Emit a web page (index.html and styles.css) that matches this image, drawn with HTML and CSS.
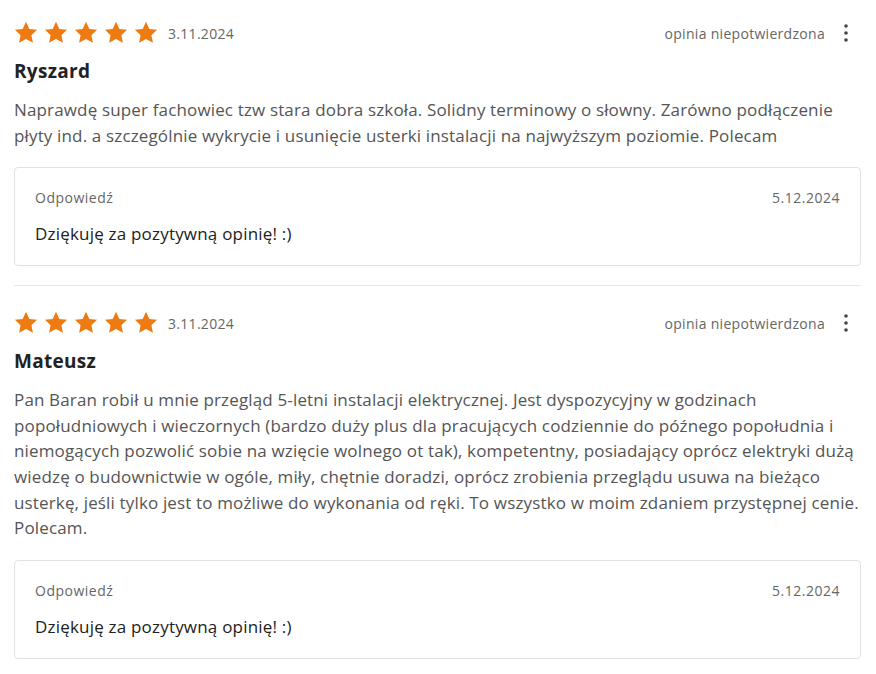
FILE: index.html
```html
<!DOCTYPE html>
<html lang="pl">
<head>
<meta charset="utf-8">
<link rel="stylesheet" href="styles.css">
</head>
<body>
<div class="reviews">
  <div class="review">
    <div class="head">
      <div class="stars">
        <svg viewBox="0 0 24 24" class="star"><path d="M12 1.6l3.1 6.6 7.1.9-5.2 4.9 1.4 7.1L12 17.6l-6.4 3.5 1.4-7.1-5.2-4.9 7.1-.9z"/></svg>
        <svg viewBox="0 0 24 24" class="star"><path d="M12 1.6l3.1 6.6 7.1.9-5.2 4.9 1.4 7.1L12 17.6l-6.4 3.5 1.4-7.1-5.2-4.9 7.1-.9z"/></svg>
        <svg viewBox="0 0 24 24" class="star"><path d="M12 1.6l3.1 6.6 7.1.9-5.2 4.9 1.4 7.1L12 17.6l-6.4 3.5 1.4-7.1-5.2-4.9 7.1-.9z"/></svg>
        <svg viewBox="0 0 24 24" class="star"><path d="M12 1.6l3.1 6.6 7.1.9-5.2 4.9 1.4 7.1L12 17.6l-6.4 3.5 1.4-7.1-5.2-4.9 7.1-.9z"/></svg>
        <svg viewBox="0 0 24 24" class="star"><path d="M12 1.6l3.1 6.6 7.1.9-5.2 4.9 1.4 7.1L12 17.6l-6.4 3.5 1.4-7.1-5.2-4.9 7.1-.9z"/></svg>
        <span class="date">3.11.2024</span>
      </div>
      <div class="status">
        <span>opinia niepotwierdzona</span>
        <svg class="kebab" viewBox="0 0 6 20"><circle cx="3" cy="3" r="1.8"/><circle cx="3" cy="10" r="1.8"/><circle cx="3" cy="17" r="1.8"/></svg>
      </div>
    </div>
    <div class="name">Ryszard</div>
    <p class="text">Naprawdę super fachowiec tzw stara dobra szkoła. Solidny terminowy o słowny. Zarówno podłączenie płyty ind. a szczególnie wykrycie i usunięcie usterki instalacji na najwyższym poziomie. Polecam</p>
    <div class="answer">
      <div class="answer-head"><span>Odpowiedź</span><span>5.12.2024</span></div>
      <div class="answer-text">Dziękuję za pozytywną opinię! :)</div>
    </div>
  </div>
  <div class="review">
    <div class="head">
      <div class="stars">
        <svg viewBox="0 0 24 24" class="star"><path d="M12 1.6l3.1 6.6 7.1.9-5.2 4.9 1.4 7.1L12 17.6l-6.4 3.5 1.4-7.1-5.2-4.9 7.1-.9z"/></svg>
        <svg viewBox="0 0 24 24" class="star"><path d="M12 1.6l3.1 6.6 7.1.9-5.2 4.9 1.4 7.1L12 17.6l-6.4 3.5 1.4-7.1-5.2-4.9 7.1-.9z"/></svg>
        <svg viewBox="0 0 24 24" class="star"><path d="M12 1.6l3.1 6.6 7.1.9-5.2 4.9 1.4 7.1L12 17.6l-6.4 3.5 1.4-7.1-5.2-4.9 7.1-.9z"/></svg>
        <svg viewBox="0 0 24 24" class="star"><path d="M12 1.6l3.1 6.6 7.1.9-5.2 4.9 1.4 7.1L12 17.6l-6.4 3.5 1.4-7.1-5.2-4.9 7.1-.9z"/></svg>
        <svg viewBox="0 0 24 24" class="star"><path d="M12 1.6l3.1 6.6 7.1.9-5.2 4.9 1.4 7.1L12 17.6l-6.4 3.5 1.4-7.1-5.2-4.9 7.1-.9z"/></svg>
        <span class="date">3.11.2024</span>
      </div>
      <div class="status">
        <span>opinia niepotwierdzona</span>
        <svg class="kebab" viewBox="0 0 6 20"><circle cx="3" cy="3" r="1.8"/><circle cx="3" cy="10" r="1.8"/><circle cx="3" cy="17" r="1.8"/></svg>
      </div>
    </div>
    <div class="name">Mateusz</div>
    <p class="text">Pan Baran robił u mnie przegląd 5-letni instalacji elektrycznej. Jest dyspozycyjny w godzinach popołudniowych i wieczornych (bardzo duży plus dla pracujących codziennie do późnego popołudnia i niemogących pozwolić sobie na wzięcie wolnego ot tak), kompetentny, posiadający oprócz elektryki dużą wiedzę o budownictwie w ogóle, miły, chętnie doradzi, oprócz zrobienia przeglądu usuwa na bieżąco usterkę, jeśli tylko jest to możliwe do wykonania od ręki. To wszystko w moim zdaniem przystępnej cenie. Polecam.</p>
    <div class="answer">
      <div class="answer-head"><span>Odpowiedź</span><span>5.12.2024</span></div>
      <div class="answer-text">Dziękuję za pozytywną opinię! :)</div>
    </div>
  </div>
</div>
</body>
</html>
```

FILE: styles.css
```css
* { box-sizing: border-box; }
html, body { margin: 0; padding: 0; background: #fff; }
body {
  font-family: "Open Sans", "Noto Sans", sans-serif;
  color: #555;
}
.reviews {
  padding: 18px 15px 0 14px;
}
.review {
  padding-bottom: 19px;
  border-bottom: 1px solid #e8e8e8;
  margin-bottom: 22px;
}
.review:last-child { border-bottom: none; }
.head {
  display: flex;
  justify-content: space-between;
  align-items: center;
  height: 30px;
}
.stars {
  display: flex;
  align-items: center;
  gap: 8px;
  padding-left: 1px;
}
.star {
  width: 26px;
  height: 26px;
  fill: #ee7a12;
  margin: 0 -2px;
}
.date {
  font-size: 14px;
  letter-spacing: 0.3px;
  color: #666;
  margin-left: 3px;
}
.status {
  display: flex;
  align-items: center;
  font-size: 14px;
  letter-spacing: 0.3px;
  color: #666;
}
.kebab {
  width: 6px;
  height: 20px;
  fill: #444;
  margin-left: 18px;
  margin-right: 12px;
}
.name {
  font-size: 19px;
  font-weight: 700;
  letter-spacing: 0.3px;
  color: #222;
  margin-top: 10px;
  line-height: 26px;
}
.text {
  margin: 13px 0 19px;
  font-size: 17px;
  letter-spacing: 0.15px;
  line-height: 25.6px;
  color: #555;
}
.answer {
  border: 1px solid #e2e2e2;
  border-radius: 4px;
  padding: 20px 20px 20px 20px;
}
.answer-head {
  display: flex;
  justify-content: space-between;
  font-size: 14px;
  letter-spacing: 0.5px;
  color: #666;
  line-height: 20px;
}
.answer-text {
  margin-top: 15px;
  font-size: 17px;
  letter-spacing: 0.2px;
  color: #222;
  line-height: 22px;
}
```
